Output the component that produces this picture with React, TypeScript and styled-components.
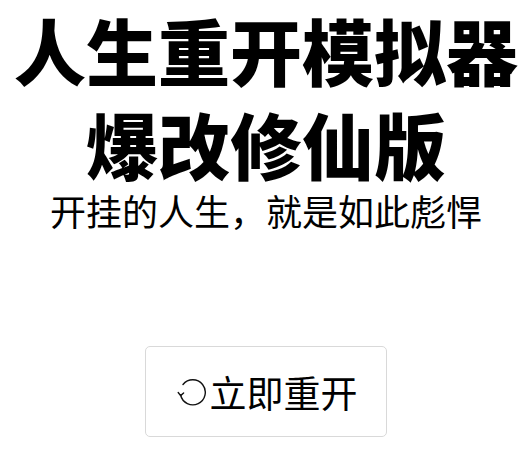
import React from 'react';
import styled, { createGlobalStyle } from 'styled-components';

const GlobalStyle = createGlobalStyle`
  html, body {
    margin: 0;
    padding: 0;
    background: #ffffff;
    color: #000000;
    font-family: 'Noto Sans CJK SC', 'Noto Sans', sans-serif;
  }
`;

// circle arrow, opening at lower left
function RestartIcon() {
  return (
    <svg width='30' height='30' viewBox='0 0 30 30' fill='none'>
      <path d='M3.6 18 A12.5 12.5 0 1 0 6 7.5' stroke='#111' strokeWidth='1.4' strokeLinecap='round' />
      <path d='M1.2 15.5 L3.6 18.6 L6.6 16' stroke='#111' strokeWidth='1.4' strokeLinecap='round' strokeLinejoin='round' />
    </svg>
  );
}

function App() {
  return (
    <>
      <GlobalStyle />
      <Page>
        <Title>
          人生重开模拟器
          <br />
          爆改修仙版
        </Title>
        <Subtitle>开挂的人生，就是如此彪悍</Subtitle>
        <RestartButton>
          <RestartIcon />
          立即重开
        </RestartButton>
      </Page>
    </>
  );
}

export default App;

const Page = styled.main`
  display: flex;
  flex-direction: column;
  align-items: center;
  padding-top: 2px;
`;

const Title = styled.h1`
  margin: 0;
  font-size: 72px;
  line-height: 94px;
  font-weight: 900;
  text-align: center;
  letter-spacing: 0;
`;

const Subtitle = styled.p`
  margin: 0;
  font-size: 36px;
  line-height: 40px;
  font-weight: 400;
  text-align: center;
`;

const RestartButton = styled.button`
  margin-top: 116px;
  width: 242px;
  height: 91px;
  display: flex;
  align-items: center;
  justify-content: center;
  gap: 3px;
  background: #ffffff;
  border: 1px solid #d9d9d9;
  border-radius: 5px;
  font-family: 'Noto Sans CJK SC', sans-serif;
  font-size: 37px;
  color: #000000;
  cursor: pointer;
  padding: 0 0 0 2px;
`;
